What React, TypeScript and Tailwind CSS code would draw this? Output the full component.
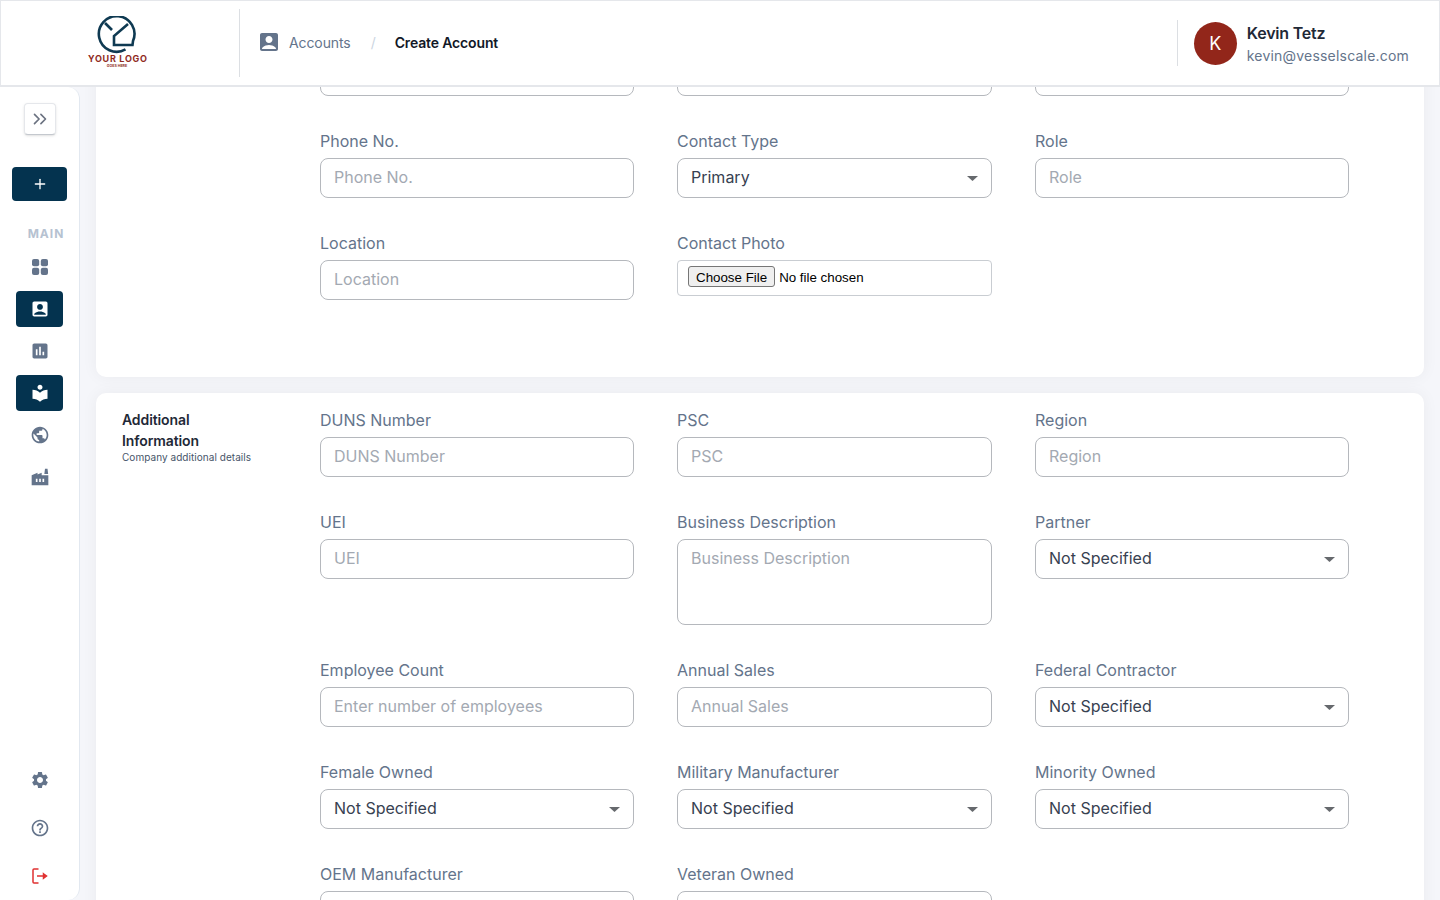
import React from "react";
import { ChevronsRight, Plus } from "lucide-react";
import {
  MdAccountBox,
  MdAssessment,
  MdLocalLibrary,
  MdPublic,
  MdFactory,
  MdSettings,
  MdHelpOutline,
} from "react-icons/md";

const font = { fontFamily: "Inter, 'Noto Sans', sans-serif" };

function Logo() {
  return (
    <svg width="62" height="54" viewBox="0 0 62 54" className="block mr-[4px]">
      <path d="M38.5 33.4 A17.8 17.8 0 1 1 46 25 L45.5 29 H27 V20 L41 8" fill="none" stroke="#0f3a52" strokeWidth="2.6" />
      <path d="M18 7 L25 14" stroke="#0f3a52" strokeWidth="2.6" fill="none" />
      <text x="1" y="46" textLength="59" lengthAdjust="spacing" fontSize="9" fontWeight="700" fill="#8f2a1e" fontFamily="Inter, sans-serif">YOUR LOGO</text>
      <text x="30" y="51" textAnchor="middle" fontSize="3.6" fontWeight="700" fill="#8f2a1e" fontFamily="Inter, sans-serif">GOES HERE</text>
    </svg>
  );
}

function Header() {
  return (
    <header className="h-[87px] shrink-0 flex items-center bg-white border border-b-2 border-[#e5e7eb] relative z-10">
      <div className="w-[238px] h-[68px] flex items-center justify-center border-r border-[#dcdfe3] box-content">
        <Logo />
      </div>
      <div className="flex items-center pl-[17px] pb-[2px] flex-1">
        <MdAccountBox className="w-[24px] h-[24px] text-[#64748b]" />
        <span className="ml-[8px] text-[14px] text-[#64748b] tracking-[-0.1px]">Accounts</span>
        <span className="ml-[20px] text-[14px] text-[#cbd5e1]">/</span>
        <span className="ml-[19px] text-[14px] font-semibold text-[#111827] tracking-[-0.15px]">Create Account</span>
      </div>
      <div className="h-[46px] border-l border-[#dcdfe3] pl-[16px] pr-[30px] flex items-center">
        <div className="w-[43px] h-[43px] rounded-full bg-[#92261a] text-white text-[18px] flex items-center justify-center">K</div>
        <div className="ml-[10px] pt-[2px]">
          <div className="text-[16px] leading-[22px] mb-[2px] font-semibold text-[#1f2937] tracking-[-0.2px]">Kevin Tetz</div>
          <div className="text-[14px] leading-[20px] text-[#64748b] tracking-[0.2px]">kevin@vesselscale.com</div>
        </div>
      </div>
    </header>
  );
}

function DashIcon() {
  return (
    <svg width="16" height="16" viewBox="0 0 16 16" fill="#64748b">
      <rect x="0" y="0" width="7.2" height="7.2" rx="2" />
      <rect x="8.8" y="0" width="7.2" height="7.2" rx="2" />
      <rect x="0" y="8.8" width="7.2" height="7.2" rx="2" />
      <rect x="8.8" y="8.8" width="7.2" height="7.2" rx="2" />
    </svg>
  );
}

function LogoutIcon() {
  return (
    <svg width="16" height="16" viewBox="0 0 16 16" fill="none" stroke="#e03131" strokeWidth="1.5">
      <path d="M6.5 1 H2 Q1 1 1 2 V14 Q1 15 2 15 H6.5" />
      <path d="M5 8 H13" />
      <path d="M11.5 5.8 L14.5 8 L11.5 10.2 Z" fill="#e03131" />
    </svg>
  );
}

function NavItem({ children, active }: { children: React.ReactNode; active?: boolean }) {
  return (
    <div className={active ? "w-[47px] h-[36px] rounded-[4px] bg-[#04334f] text-white flex items-center justify-center" : "w-[47px] h-[36px] text-[#64748b] flex items-center justify-center"}>
      {children}
    </div>
  );
}

function Sidebar() {
  return (
    <aside className="w-[80px] shrink-0 bg-white border-r border-[#e2e8f0] rounded-r-[12px] flex flex-col items-center relative">
      <button className="mt-[16px] w-[32px] h-[32px] rounded-[4px] border border-[#e5e7eb] border-b-[#c4c8ce] bg-white shadow-sm flex items-center justify-center text-[#6b7280]">
        <ChevronsRight className="w-[22px] h-[22px]" strokeWidth={1.8} />
      </button>
      <button className="mt-[32px] w-[55px] h-[34px] rounded-[4px] bg-[#04334f] text-white flex items-center justify-center">
        <Plus className="w-[16px] h-[16px]" strokeWidth={2} />
      </button>
      <div className="mt-[25px] ml-[13px] text-[12px] leading-[16px] font-bold tracking-[1px] text-[#b6c2d1]">MAIN</div>
      <div className="mt-[7px] flex flex-col gap-[6px]">
        <NavItem><DashIcon /></NavItem>
        <NavItem active><MdAccountBox className="w-[20px] h-[20px]" /></NavItem>
        <NavItem><MdAssessment className="w-[20px] h-[20px]" /></NavItem>
        <NavItem active><MdLocalLibrary className="w-[20px] h-[20px]" /></NavItem>
        <NavItem><MdPublic className="w-[20px] h-[20px]" /></NavItem>
        <NavItem><MdFactory className="w-[20px] h-[20px]" /></NavItem>
      </div>
      <div className="mt-auto mb-[6px] flex flex-col gap-[12px]">
        <NavItem><MdSettings className="w-[20px] h-[20px]" /></NavItem>
        <NavItem><MdHelpOutline className="w-[20px] h-[20px]" /></NavItem>
        <NavItem><LogoutIcon /></NavItem>
      </div>
    </aside>
  );
}

const inputCls = "block w-full h-[40px] rounded-[8px] border border-[#b5b8bd] bg-white px-[13px] pb-[2px] text-[16px] text-[#1f2937] placeholder:text-[#a3a9b2] outline-none";

function Label({ text }: { text?: string }) {
  return <div className="h-[20px] mb-[7px] text-[16px] leading-[20px] text-[#64748b]">{text}</div>;
}

function Input({ label, ph }: { label?: string; ph?: string }) {
  return (
    <div>
      <Label text={label} />
      <input className={inputCls} placeholder={ph ?? label} readOnly />
    </div>
  );
}

function Select({ label, value = "Not Specified" }: { label: string; value?: string }) {
  return (
    <div>
      <Label text={label} />
      <div role="combobox" aria-expanded={false} className="h-[40px] rounded-[8px] border border-[#b5b8bd] bg-white pl-[13px] pr-[13px] pb-[2px] flex items-center justify-between text-[16px] text-[#374151]">
        <span>{value}</span>
        <svg width="11" height="5" viewBox="0 0 11 5" className="block mt-[2px]">
          <path d="M0 0 H11 L5.5 5 Z" fill="#66696d" />
        </svg>
      </div>
    </div>
  );
}

function Grid({ children }: { children: React.ReactNode }) {
  return <div className="grid grid-cols-[314px_315px_314px] gap-x-[43px] gap-y-[35px] items-start">{children}</div>;
}

const cardCls = "bg-white rounded-[10px] shadow-[0_0_16px_rgba(15,23,42,0.05)] flex pl-[26px]";

export default function App() {
  return (
    <div className="h-screen flex flex-col overflow-hidden bg-[#f5f6fa]" style={font}>
      <Header />
      <div className="flex flex-1 min-h-0">
        <Sidebar />
        <main className="flex-1 min-w-0 overflow-hidden pl-[16px] pr-[16px]">
          <section className={`${cardCls} mt-[-75px] pt-[17px] pb-[77px]`}>
            <div className="w-[198px] shrink-0" />
            <Grid>
              <div><Label /><input className={inputCls} readOnly /></div>
              <div><Label /><input className={inputCls} readOnly /></div>
              <div><Label /><input className={inputCls} readOnly /></div>
              <Input label="Phone No." />
              <Select label="Contact Type" value="Primary" />
              <Input label="Role" />
              <Input label="Location" />
              <div>
                <Label text="Contact Photo" />
                <input
                  type="file"
                  className="block w-full h-[36px] rounded-[4px] border border-[#c9cdd2] bg-white px-[10px] py-[5px] text-[13.33px] leading-[22px] text-black file:mr-[4px] file:h-[21px] file:px-[7px] file:rounded-[3px] file:border file:border-[#767676] file:bg-[#efefef] file:text-[13.33px]"
                  style={{ fontFamily: "'Liberation Sans', Arial, sans-serif" }}
                />
              </div>
            </Grid>
          </section>
          <section className={`${cardCls} mt-[16px] pt-[17px] pb-[60px]`}>
            <div className="w-[198px] shrink-0 pr-[60px] -mt-[1px]">
              <div className="text-[14px] leading-[21px] font-semibold text-[#1f2937] tracking-[-0.1px]">Additional Information</div>
              <div className="w-[140px] text-[10px] leading-[12px] text-[#475569] tracking-[0.05px]">Company additional details</div>
            </div>
            <Grid>
              <Input label="DUNS Number" />
              <Input label="PSC" />
              <Input label="Region" />
              <Input label="UEI" />
              <div>
                <Label text="Business Description" />
                <textarea
                  readOnly
                  placeholder="Business Description"
                  className="block w-full h-[86px] rounded-[8px] border border-[#b5b8bd] bg-white px-[13px] py-[6px] text-[16px] placeholder:text-[#a3a9b2] outline-none resize-none"
                />
              </div>
              <Select label="Partner" />
              <Input label="Employee Count" ph="Enter number of employees" />
              <Input label="Annual Sales" />
              <Select label="Federal Contractor" />
              <Select label="Female Owned" />
              <Select label="Military Manufacturer" />
              <Select label="Minority Owned" />
              <Select label="OEM Manufacturer" />
              <Select label="Veteran Owned" />
            </Grid>
          </section>
        </main>
      </div>
    </div>
  );
}
